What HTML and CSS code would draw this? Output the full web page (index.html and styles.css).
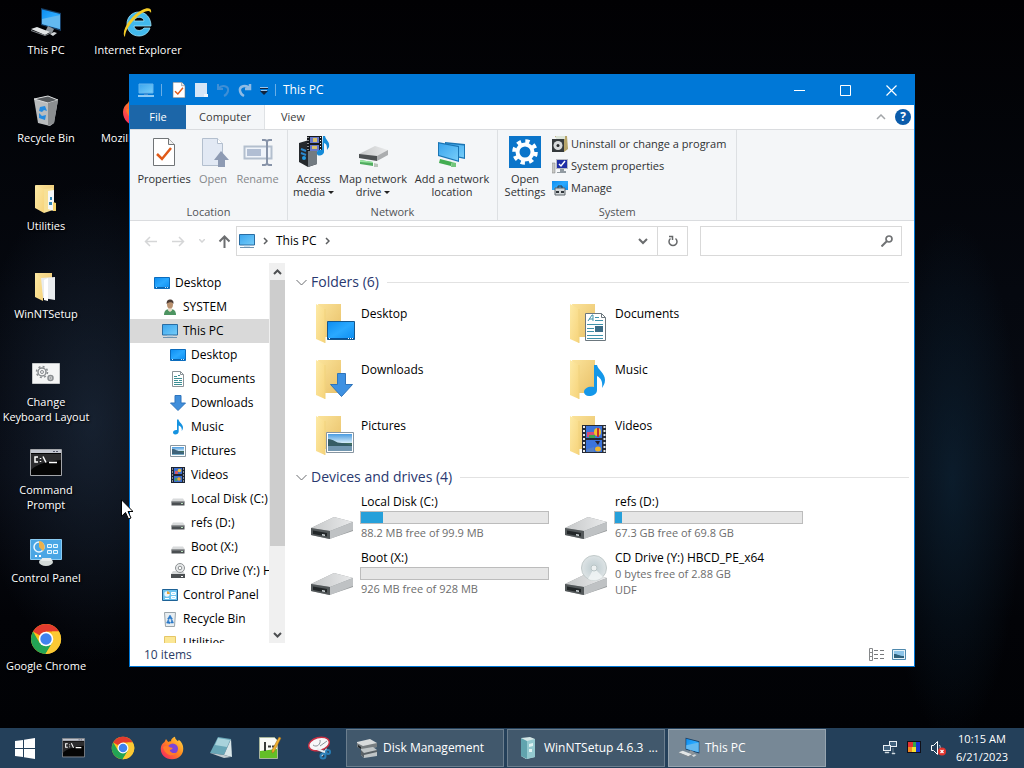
FILE: index.html
```
<!DOCTYPE html>
<html lang="en">
<head>
<meta charset="utf-8">
<title>This PC</title>
<link rel="stylesheet" href="styles.css">
</head>
<body>
<svg class="sprite" width="0" height="0" aria-hidden="true">
  <defs>
    <linearGradient id="gScreen" x1="0" y1="0" x2="1" y2="1"><stop offset="0" stop-color="#3aa5ee"/><stop offset="1" stop-color="#76cdf9"/></linearGradient>
    <linearGradient id="gBlue" x1="0" y1="0" x2="1" y2="1"><stop offset="0" stop-color="#0d8df0"/><stop offset=".5" stop-color="#2aa9ff"/><stop offset="1" stop-color="#0b8cf0"/></linearGradient>
    <linearGradient id="gFolder" x1="0" y1="0" x2="1" y2="1"><stop offset="0" stop-color="#fdeaa6"/><stop offset="1" stop-color="#f6d37a"/></linearGradient>
    <linearGradient id="gBack" x1="0" y1="0" x2="1" y2="1"><stop offset="0" stop-color="#fbe39a"/><stop offset="1" stop-color="#e8c068"/></linearGradient>
    <linearGradient id="gMetal" x1="0" y1="0" x2="1" y2="0"><stop offset="0" stop-color="#c6c8c9"/><stop offset="1" stop-color="#e9eaeb"/></linearGradient>
    <linearGradient id="gSky" x1="0" y1="0" x2="0" y2="1"><stop offset="0" stop-color="#4a9be0"/><stop offset=".5" stop-color="#cfe8f7"/><stop offset=".55" stop-color="#3f6c5a"/><stop offset="1" stop-color="#7fb6d8"/></linearGradient>
    <linearGradient id="gFire" x1="1" y1="0" x2="0" y2="1"><stop offset="0" stop-color="#ffe14a"/><stop offset=".45" stop-color="#ff8a1e"/><stop offset="1" stop-color="#f5156c"/></linearGradient>
    <radialGradient id="gDisc"><stop offset="0" stop-color="#ffffff"/><stop offset=".3" stop-color="#c7d3d6"/><stop offset="1" stop-color="#dde3e5"/></radialGradient>
  </defs>

  <symbol id="i-pc" viewBox="0 0 16 16"><path d="M.5 1.500h15v10.500h-15z" fill="url(#gScreen)" stroke="#2a6da3"/><path d="M5 12.500h6v1H5z" fill="#9fc4df"/><path d="M1 14h14v1H1z" fill="#6f93b0"/></symbol>
  <symbol id="i-pclight" viewBox="0 0 16 16"><path d="M1 2h14v9H1z" fill="url(#gScreen)" stroke="#63b4ee"/><path d="M6 11h4v2H6z" fill="#3c8fd6"/><path d="M0 13h16v2H0z" fill="#8cc9f4"/></symbol>
  <symbol id="i-desk" viewBox="0 0 16 16"><path d="M.5 2.500h15v11h-15z" fill="url(#gBlue)" stroke="#0b6cbd"/><path d="M1 12h14v1H1z" fill="#0a63ad"/><path d="M2 12h1v1H2zm9 0h1v1h-1zm2 0h1v1h-1z" fill="#bfe4ff"/></symbol>
  <symbol id="i-user" viewBox="0 0 16 16"><path d="M2 16c0-4 2-6 6-6s6 2 6 6z" fill="#4d9461"/><path d="M6 9h4v2.500L8 13l-2-1.500z" fill="#e9dccb"/><ellipse cx="8" cy="5.500" rx="3" ry="4" fill="#b9916f"/><path d="M4.600 5C4.500 1.500 6 .4 8.200.4S12 2 11.400 5c-.8-2-4.500-2.500-6.800 0z" fill="#4c3c35"/></symbol>
  <symbol id="i-doc" viewBox="0 0 16 16"><path d="M2.500.5h8l3 3v12h-11z" fill="#fff" stroke="#8b9398"/><path d="M10.500.5v3h3" fill="none" stroke="#8b9398"/><path d="M4 5.500h3M8 4.500h2M4 7.500h8M4 9.500h4M9 9.500h3M4 11.500h8M4 13.500h8" stroke="#3d8f95"/></symbol>
  <symbol id="i-down" viewBox="0 0 16 16"><path d="M5 .5h6V8h4.500L8 15.500.5 8H5z" fill="#3f8edb" stroke="#2f75bd"/></symbol>
  <symbol id="i-note" viewBox="0 0 16 16"><path d="M7 .5h1.500C9 3.500 13 5 13 8.500c0 1.500-.6 2.500-1.300 3.500.7-2.700-.8-4.600-3-5.500v6c0 2-1.700 3-3.400 3S3 14.500 3 13.300c0-1.500 1.700-2.600 4-2.300z" fill="#1592e0"/></symbol>
  <symbol id="i-pic" viewBox="0 0 16 16"><path d="M.5 2.500h15v11h-15z" fill="#fff" stroke="#8896a0"/><path d="M2 4h12v8H2z" fill="url(#gSky)"/><path d="M2 6c4 0 5 2 9 3l3 .5V11H2z" fill="#3f637a"/></symbol>
  <symbol id="i-film" viewBox="0 0 16 16"><path d="M1 0h14v16H1z" fill="#1c2433"/><path d="M4 1h8v6H4zm0 8h8v6H4z" fill="#3c70d0"/><path d="M2 1.500h1v1H2zm0 3h1v1H2zm0 3h1v1H2zm0 3h1v1H2zm0 3h1v1H2zm11-12h1v1h-1zm0 3h1v1h-1zm0 3h1v1h-1zm0 3h1v1h-1zm0 3h1v1h-1z" fill="#fff"/><path d="M5 4h3v3H5z" fill="#cf5a6c"/><circle cx="9.500" cy="3.500" r="1.800" fill="#efc23b"/><circle cx="9" cy="12" r="1.800" fill="#e8a02d"/><path d="M5 11h2v3H5z" fill="#48a05b"/></symbol>
  <symbol id="i-drive" viewBox="0 0 16 16"><path d="M3 7.500h10l2 3H1z" fill="#d8dadb"/><path d="M1.500 10.500h13v4h-13z" fill="#4b4f52"/><path d="M1.500 10.500h13v1h-13z" fill="#888c8f"/><path d="M11 12h2v1h-2z" fill="#b7dfba"/></symbol>
  <symbol id="i-cd" viewBox="0 0 16 16"><path d="M3 8h10l2 3H1z" fill="#d8dadb"/><circle cx="10" cy="5" r="4.500" fill="#e8eaeb" stroke="#8d9193"/><circle cx="10" cy="5" r="1.800" fill="#fff" stroke="#8d9193"/><path d="M1 11h14v4H1z" fill="#4b4f52"/><path d="M11 13h2v1h-2z" fill="#fff"/></symbol>
  <symbol id="i-cpl" viewBox="0 0 16 16"><path d="M.5 2.500h15v11h-15z" fill="#6cc3ee" stroke="#1e6296"/><circle cx="5" cy="7" r="2.700" fill="#eaf6fd"/><path d="M5 7V4.200A2.800 2.800 0 0 1 7.800 7z" fill="#e6a53c"/><path d="M9.500 5.500h4v2h-4zm0 4h4v2h-4z" fill="#a8e4ff" stroke="#fff"/><path d="M3 11h4v1H3z" fill="#fff"/></symbol>
  <symbol id="i-bin" viewBox="0 0 16 16"><path d="M2.500 1.500h11l-1 14h-9z" fill="#e8eef1" stroke="#9aa4aa"/><path d="M8 4l2.500 4-1.300.8L8 7 6.800 8.800 5.500 8zM4.500 12l1.500-3 1.200.8-.6 1.200H8v1.500zm7 0H8.800V11l.8-.3-.6-.9 1.200-.8z" fill="#2a79c8" stroke="#2a79c8" stroke-width=".5"/></symbol>
  <symbol id="i-fold" viewBox="0 0 16 16"><path d="M2.500 1.500h11v14h-11z" fill="#fbe795" stroke="#e5c667"/></symbol>

  <symbol id="f-base" viewBox="0 0 48 48"><path d="M10 4h23v33H14z" fill="url(#gBack)"/><path d="M8 4l9 5v34L8 39z" fill="url(#gFolder)"/><path d="M17 9v34" stroke="#f1d37d"/></symbol>
  <symbol id="d-base" viewBox="0 0 48 48"><path d="M3 34l23-11 19 5v9L21 45 3 41z" fill="#96999b"/><path d="M3 34l23-11 19 5-23 9z" fill="url(#gMetal)"/><path d="M22 37l23-9v8l-23 9z" fill="#bfc2c4"/><path d="M3 34l19 3v8L3 41z" fill="#53585a"/><path d="M5 36.500l14 2.500v3.500L5 40z" fill="#222628"/><path d="M14 40l3 .5v1.500l-3-.5z" fill="#d5dcdf"/></symbol>

  <symbol id="i-chrome" viewBox="0 0 32 32"><circle cx="16" cy="16" r="15" fill="#fbc116"/><path d="M16 16 3 8.500A15 15 0 0 1 29 8.500H16z" fill="#e33b2e"/><path d="M3 8.500A15 15 0 0 0 15.500 31L22.500 19.500 9.500 19.700z" fill="#23a455"/><path d="M29 8.500A15 15 0 0 1 15.500 31l7-11.500L22 8.500z" fill="#fcc934"/><circle cx="16" cy="16" r="7.300" fill="#fff"/><circle cx="16" cy="16" r="5.700" fill="#3f83f0"/></symbol>
  <symbol id="i-fox" viewBox="0 0 32 32"><path d="M6 8l2-4 3 4c2-1 3-1 4-1-1-2 2-5 5-6 0 3 2 4 4 6l1-2c4 3 6 7 6 12 0 8-6 14-15 14S1 25 1 17c0-4 2-7 5-9z" fill="url(#gFire)"/><circle cx="17" cy="17" r="7" fill="#7a45d8"/><path d="M4 15c4-3 7-2 9 0l4 1c-1 2-3 2-4 3 1 3 5 5 9 3-2 4-8 5-12 2-3-2-5-5-6-9z" fill="#ff7a2b"/></symbol>
  <symbol id="i-cmd" viewBox="0 0 32 28"><path d="M.5.5h31v26h-31z" fill="#050505" stroke="#a3a5a9"/><path d="M1 1h30v3H1z" fill="#c2c5ce"/><path d="M23 2h2v1h-2zm3 0h2v1h-2z" fill="#55586a"/><path d="M1 5h30v6C20 12 8 14 1 21z" fill="#2c2c2e"/><path d="M8 8H5v5h3M10.500 9v1m0 2v1M13 7.500l3 6M19 13.500h8" fill="none" stroke="#fff" stroke-width="1.500"/></symbol>
  <symbol id="i-bigpc" viewBox="0 0 32 32"><path d="M11 1l20 5v18l-20-6z" fill="#173f66"/><path d="M12 2.500l18 4.600v15L12 17z" fill="url(#gBlue)"/><path d="M12 12l18-4v14L12 17z" fill="#63b9f0"/><path d="M18 19l6 3-2 4-7-1z" fill="#8c9399"/><path d="M1 22l6-2 13 5-5 3z" fill="#e2e5e6"/><path d="M1 23l14 5 7-3v1l-7 3L1 24z" fill="#858b90"/><path d="M20 27l4-2 3 1-4 3z" fill="#d3d7d9"/></symbol>
  <symbol id="i-check" viewBox="0 0 24 28"><path d="M1.500.5h15l6 6v21h-21z" fill="#fff" stroke="#707477"/><path d="M16.500.5v6h6" fill="#eee" stroke="#707477"/><path d="M5 16l5 5 9-11" fill="none" stroke="#e05a18" stroke-width="2.500"/></symbol>
  <symbol id="i-screen" viewBox="0 0 32 32"><path d="M9 6l20 2v15L9 19z" fill="#1b75b4"/><path d="M10 7.500l18 2v12L10 18z" fill="url(#gScreen)"/><path d="M2 6l21 4v16L2 20z" fill="#1b75b4"/><path d="M3 7.500l19 3.500v13.500L3 19z" fill="url(#gScreen)"/></symbol>
</svg>

<main class="desktop">
  <nav class="shortcuts" aria-label="Desktop">
    <a href="#" class="shortcut"><svg class="ico32"><use href="#i-bigpc"/></svg><span>This PC</span></a>
    <a href="#" class="shortcut"><svg class="ico32" viewBox="0 0 32 32"><path d="M29 19H12c.5 5 7 6 10 2h6c-2 6-7 8-11 8C10 29 5 24 5 17S10 5 17 5s12 6 12 14zM12 14h10c-.5-5-9-5-10 0z" fill="#42b9ec" stroke="#9ee4fb" stroke-width=".8"/><path d="M3 30C-2 25 9 8 20 3c6-3 10-2 9 3-2-4-8-1-13 3C8 16 3 24 3 30z" fill="#f4cc28"/></svg><span>Internet Explorer</span></a>
    <a href="#" class="shortcut"><svg class="ico32" viewBox="0 0 32 32"><path d="M4 4l14-3 10 4-4 23-4 3-12-3z" fill="#b9bcbe"/><path d="M4 4l14-3 10 4-10 3z" fill="#55595c" stroke="#d9dbdc"/><path d="M18 8l10-3-4 23-6 3z" fill="#8b8e90"/><path d="M10 12l5-1 2 5-3-1-2 2-3-1zm-1 6l3 3 4-1-1 5-6-2z" fill="#258be0"/></svg><span>Recycle Bin</span></a>
    <a href="#" class="shortcut"><svg class="ico32" viewBox="0 0 32 32"><path d="M6 2h18v24H8z" fill="url(#gBack)"/><path d="M5 2l9 4v24l-9-5z" fill="url(#gFolder)"/><path d="M14 6l9-1v22l-9 3z" fill="#f7e096"/><path d="M18 8l6-1v21l-6-2z" fill="#f5f7f8"/><path d="M20 14h2v3h-2zm-1 5h3v3h-3z" fill="#3387b5"/><path d="M23 19l3 1v8h-3z" fill="#f7d46d"/></svg><span>Utilities</span></a>
    <a href="#" class="shortcut"><svg class="ico32" viewBox="0 0 32 32"><path d="M5 2h17v24H8z" fill="url(#gBack)"/><path d="M5 2l8 6v22l-8-4z" fill="url(#gFolder)"/><path d="M11 7l14-1v23l-12-2z" fill="#e9ecee"/><path d="M14 9l4-2v23l-4-1z" fill="#fff"/></svg><span>WinNTSetup</span></a>
    <a href="#" class="shortcut"><svg class="ico32" viewBox="0 0 32 32"><path d="M2.500 4.500h27v20h-27z" fill="#f4f5f5" stroke="#c5c8c9"/><g fill="none" stroke="#898d90"><circle cx="12" cy="13" r="4" stroke-width="1.500"/><circle cx="12" cy="13" r="5.500" stroke-width="1.500" stroke-dasharray="2 2.320"/><circle cx="12" cy="13" r="1.500"/><circle cx="20.500" cy="19" r="2.500" stroke-width="1.500"/><circle cx="20.500" cy="19" r=".8"/></g></svg><span>Change<br>Keyboard Layout</span></a>
    <a href="#" class="shortcut"><svg class="ico32"><use href="#i-cmd"/></svg><span>Command<br>Prompt</span></a>
    <a href="#" class="shortcut"><svg class="ico32" viewBox="0 0 32 32"><path d="M.5 4.500h31v20h-31z" fill="#4aa6e4" stroke="#8bcbf2"/><circle cx="9" cy="12" r="5" fill="none" stroke="#e9f6ff" stroke-width="1.500"/><path d="M9 12V6a6 6 0 0 1 4 10z" fill="#e9b14c"/><path d="M17.500 9.500h4v3h-4zm6 0h4v3h-4zm-6 6h4v3h-4zm6 0h4v3h-4z" fill="#58b9f0" stroke="#e9f6ff"/><path d="M5 20h2v2H5zm4 0h2v2H9z" fill="#fff"/><ellipse cx="16" cy="27" rx="7" ry="4" fill="#d4dad9"/><path d="M12 23h9l1 3H11z" fill="#e8ecec"/></svg><span>Control Panel</span></a>
    <a href="#" class="shortcut"><svg class="ico32"><use href="#i-chrome"/></svg><span>Google Chrome</span></a>
    <a href="#" class="shortcut"><svg class="ico32"><use href="#i-fox"/></svg><span>Mozilla Firefox</span></a>
  </nav>

  <section class="window" aria-label="This PC">
    <header class="titlebar">
      <svg class="ico16"><use href="#i-pclight"/></svg>
      <span class="bar"></span>
      <div class="quick">
        <button aria-label="Properties"><svg class="ico16"><use href="#i-check"/></svg></button>
        <button aria-label="New folder"><svg class="ico16" viewBox="0 0 16 16"><path d="M2 1h12v11l-2 3H2z" fill="#d6e6f7"/><path d="M11 12h4v3h-4z" fill="#f1f6fb"/></svg></button>
        <button aria-label="Undo"><svg class="ico16" viewBox="0 0 16 16"><path d="M3 2v5h5M3 7c4-5 11-3 10 2-.4 2-2 4-4 5" fill="none" stroke="#3f8fd6" stroke-width="2"/></svg></button>
        <button aria-label="Redo"><svg class="ico16" viewBox="0 0 16 16"><path d="M13 2v5H8M13 7C9 2 2 4 3 9c.4 2 2 4 4 5" fill="none" stroke="#8fbbe4" stroke-width="2.500"/></svg></button>
      </div>
      <button class="more" aria-label="Customize"><svg width="8" height="8" viewBox="0 0 8 8"><path d="M0 1h8v1H0zm0 3h8L4 8z" fill="#10233c"/><path d="M0 0h8v1H0zM1 3h6v1H1z" fill="#9cc4ea"/></svg></button>
      <span class="bar"></span>
      <h1>This PC</h1>
      <div class="controls">
        <button aria-label="Minimize"><svg width="11" height="11"><path d="M0 5.500h11" stroke="#fff"/></svg></button>
        <button aria-label="Maximize"><svg width="11" height="11"><path d="M.5.5h10v10H.5z" fill="none" stroke="#fff"/></svg></button>
        <button aria-label="Close"><svg width="11" height="11"><path d="M.5.5l10 10m0-10l-10 10" stroke="#fff" stroke-width="1.200"/></svg></button>
      </div>
    </header>

    <nav class="tabs">
      <button class="file">File</button>
      <button class="current">Computer</button>
      <button class="view">View</button>
      <span class="tabs-end">
        <button aria-label="Collapse ribbon"><svg width="10" height="6"><path d="M1 5l4-4 4 4" fill="none" stroke="#a3a6a9" stroke-width="1.500"/></svg></button>
        <button class="help" aria-label="Help">?</button>
      </span>
    </nav>

    <div class="ribbon">
      <section class="group">
        <div class="tools">
          <button class="big w-prop"><svg class="ico32 inset"><use href="#i-check"/></svg>Properties</button>
          <button class="big w-open off"><svg class="ico32" viewBox="0 0 32 32"><path d="M5.500 2.500h15l5 5v22h-20z" fill="#e2e9f4" stroke="#b3bfce"/><path d="M20.500 2.500v5h5" fill="#fff" stroke="#b3bfce"/><path d="M24 15l8 9h-4v7h-7v-7h-4z" fill="#8e9bb3"/></svg>Open</button>
          <button class="big w-ren off"><svg class="ico32" viewBox="0 0 32 32"><path d="M2.500 10.500h27v12h-27z" fill="#f0f4fa" stroke="#b3bfce" stroke-width="2"/><path d="M5 13h14v7H5z" fill="#b1bed3"/><path d="M20 4h3l2 1 2-1h3M25 5v23M20 29h3l2-1 2 1h3" fill="none" stroke="#8793a8" stroke-width="2"/></svg>Rename</button>
        </div>
        <h2>Location</h2>
      </section>
      <section class="group">
        <div class="tools">
          <button class="big w-acc"><svg class="ico32" viewBox="0 0 32 32"><path d="M1 7l10-3 8 4v20l-9 3-9-5z" fill="#25292d"/><path d="M10 11l9-3v20l-9 3z" fill="#737b82"/><path d="M3 13l5 2M3 17l5 2" stroke="#2d88cc" stroke-width="2"/><circle cx="6" cy="22" r="2" fill="#249adf"/><path d="M9 0h15v15H9z" fill="#15181d"/><path d="M12 1h9v6h-9zm0 8h9v6h-9z" fill="#6878c7"/><path d="M15 2h4v4h-4zm-1 8h5v3h-5z" fill="#d8bf69"/><path d="M10 1v13M22.500 1v13" stroke="#fff" stroke-dasharray="1 2"/><path d="M25 0h2c1 5 5 5 4 11l-2 3c0-3 0-6-3-7v9c0 3-6 5-7 2s2-5 5-4z" fill="#158bd8"/></svg><span>Access<br>media <i class="caret"></i></span></button>
          <button class="big w-map"><svg class="ico32" viewBox="0 0 32 32"><path d="M2 18l16-8 13 4v4l-10 6-19-2z" fill="url(#gMetal)"/><path d="M2 18l18 2v5L2 22z" fill="#4d5153"/><path d="M20 20l11-6v5l-11 6z" fill="#abadaf"/><path d="M3 24l13 2v4L3 28z" fill="#51ad60"/><path d="M3 24l13 2v1L3 26z" fill="#9be6a3"/><path d="M17 27l4 1v3h-4z" fill="#b8c4ba"/></svg><span>Map network<br>drive <i class="caret"></i></span></button>
          <button class="big w-add"><svg class="ico32" viewBox="0 0 32 32"><use href="#i-screen"/><path d="M4 23l12 3-1 4-12-3z" fill="#43ad52"/><path d="M16 26l4 1v4h-5z" fill="#73c67b"/></svg><span>Add a network<br>location</span></button>
        </div>
        <h2>Network</h2>
      </section>
      <section class="group">
        <div class="tools">
          <button class="big w-set"><svg class="ico32" viewBox="0 0 32 32"><path d="M0 0h32v32H0z" fill="#0b75ca"/><g fill="none" stroke="#fff"><circle cx="16" cy="16" r="7.500" stroke-width="4"/><circle cx="16" cy="16" r="10.800" stroke-width="4" stroke-dasharray="4.240 4.240"/></g></svg><span>Open<br>Settings</span></button>
          <div class="small-tools">
            <button><svg class="ico16" viewBox="0 0 16 16"><path d="M3 0h12l1 13-4 3z" fill="#b6a469"/><path d="M4 0h9v3H4z" fill="#dde5d9"/><path d="M0 3h12v13H0z" fill="#353a3c"/><circle cx="6" cy="9.500" r="4.500" fill="#d8dbdc"/><circle cx="6" cy="9.500" r="1.500" fill="#25282a"/></svg>Uninstall or change a program</button>
            <button><svg class="ico16" viewBox="0 0 16 16"><path d="M0 5h3v10H0z" fill="#c8c9c5" stroke="#7c7f80" stroke-width=".5"/><path d="M4 1h12v10H4z" fill="#b9bcc4"/><path d="M5 2h10v8H5z" fill="#1f2fa6"/><path d="M7 6l2 2 4-5" fill="none" stroke="#fff" stroke-width="1.500"/><path d="M8 11h4v2h2v2H5v-1h3z" fill="#929ba2"/></svg>System properties</button>
            <button><svg class="ico16" viewBox="0 0 16 16"><path d="M0 1h16v9H0z" fill="url(#gBlue)"/><path d="M3 8h10v7H3z" fill="#d3d7d9" stroke="#5c656b"/><path d="M6 8V6h4v2" fill="none" stroke="#333a40"/><path d="M4 11h3v2H4zm5 0h3v2H9z" fill="#30363c"/></svg>Manage</button>
          </div>
        </div>
        <h2>System</h2>
      </section>
    </div>

    <div class="location">
      <div class="history">
        <button class="w28" aria-label="Back"><svg width="13" height="11"><path d="M13 5.500H1.500M6 1L1.500 5.500 6 10" fill="none" stroke="#d5d6d7" stroke-width="1.500"/></svg></button>
        <button class="w28" aria-label="Forward"><svg width="13" height="11"><path d="M0 5.500h11.500M7 1l4.500 4.500L7 10" fill="none" stroke="#d5d6d7" stroke-width="1.500"/></svg></button>
        <button class="w20" aria-label="Recent"><svg width="6" height="4"><path d="M0 0l3 3 3-3" fill="none" stroke="#d5d6d7" stroke-width="1.500"/></svg></button>
        <button class="w22" aria-label="Up"><svg width="13" height="13"><path d="M6.500 13V1.500M1.500 6.500l5-5 5 5" fill="none" stroke="#6c6e70" stroke-width="2"/></svg></button>
      </div>
      <div class="address">
        <svg class="ico16"><use href="#i-pc"/></svg>
        <svg width="5" height="8"><path d="M1 1l3 3-3 3" fill="none" stroke="#5c5e60" stroke-width="1.500"/></svg>
        <a href="#">This PC</a>
        <svg width="5" height="8"><path d="M1 1l3 3-3 3" fill="none" stroke="#5c5e60" stroke-width="1.500"/></svg>
        <button class="drop" aria-label="Previous locations"><svg width="10" height="7"><path d="M1 1l4 4 4-4" fill="none" stroke="#6a6c6e" stroke-width="2"/></svg></button>
        <button class="refresh" aria-label="Refresh"><svg width="12" height="12" viewBox="0 0 12 12"><path d="M8.500 3.500A4 4 0 1 1 3.500 3.500M2 1.500h3.500V5" fill="none" stroke="#66686a" stroke-width="1.500"/></svg></button>
      </div>
      <label class="search"><input type="text" aria-label="Search This PC"><svg width="12" height="12"><circle cx="8" cy="4" r="3" fill="none" stroke="#707274" stroke-width="1.700"/><path d="M6 6l-5.500 5.500" stroke="#707274" stroke-width="2"/></svg></label>
    </div>

    <div class="body">
      <nav class="tree" aria-label="Folders">
        <a href="#" class="l1"><svg class="ico16"><use href="#i-desk"/></svg>Desktop</a>
        <a href="#" class="l2"><svg class="ico16"><use href="#i-user"/></svg>SYSTEM</a>
        <a href="#" class="l2 selected"><svg class="ico16"><use href="#i-pc"/></svg>This PC</a>
        <a href="#" class="l3"><svg class="ico16"><use href="#i-desk"/></svg>Desktop</a>
        <a href="#" class="l3"><svg class="ico16"><use href="#i-doc"/></svg>Documents</a>
        <a href="#" class="l3"><svg class="ico16"><use href="#i-down"/></svg>Downloads</a>
        <a href="#" class="l3"><svg class="ico16"><use href="#i-note"/></svg>Music</a>
        <a href="#" class="l3"><svg class="ico16"><use href="#i-pic"/></svg>Pictures</a>
        <a href="#" class="l3"><svg class="ico16"><use href="#i-film"/></svg>Videos</a>
        <a href="#" class="l3"><svg class="ico16"><use href="#i-drive"/></svg>Local Disk (C:)</a>
        <a href="#" class="l3"><svg class="ico16"><use href="#i-drive"/></svg>refs (D:)</a>
        <a href="#" class="l3"><svg class="ico16"><use href="#i-drive"/></svg>Boot (X:)</a>
        <a href="#" class="l3"><svg class="ico16"><use href="#i-cd"/></svg>CD Drive (Y:) HBCD_PE_x64</a>
        <a href="#" class="l2"><svg class="ico16"><use href="#i-cpl"/></svg>Control Panel</a>
        <a href="#" class="l2"><svg class="ico16"><use href="#i-bin"/></svg>Recycle Bin</a>
        <a href="#" class="l2"><svg class="ico16"><use href="#i-fold"/></svg>Utilities</a>
      </nav>
      <div class="scroll">
        <button aria-label="Scroll up"><svg width="9" height="6"><path d="M1 5l3.500-3.500L8 5" fill="none" stroke="#4d4f51" stroke-width="2"/></svg></button>
        <div class="track"><div class="thumb"></div></div>
        <button aria-label="Scroll down"><svg width="9" height="6"><path d="M1 1l3.500 3.500L8 1" fill="none" stroke="#4d4f51" stroke-width="2"/></svg></button>
      </div>

      <div class="files">
        <section>
          <h2 class="head"><svg width="11" height="7"><path d="M.5 1l5 5 5-5" fill="none" stroke="#6a6c70"/></svg>Folders (6)</h2>
          <div class="tiles">
            <button class="tile"><svg class="ico48" viewBox="0 0 48 48"><use href="#f-base"/><path d="M19.500 21.500h27v18h-27z" fill="url(#gBlue)" stroke="#15578d"/><path d="M20 38h26v1H20z" fill="#07529a"/><path d="M21 38h1v1h-1zm19 0h1v1h-1zm2 0h1v1h-1zm2 0h1v1h-1z" fill="#fff"/></svg><span class="name">Desktop</span></button>
            <button class="tile"><svg class="ico48" viewBox="0 0 48 48"><use href="#f-base"/><path d="M23.500 13.500h16l4 4v23h-20z" fill="#fff" stroke="#6c777e"/><path d="M39.500 13.500v4h4" fill="none" stroke="#6c777e"/><path d="M26 21l4-6h1v6M27 19h4M33 17.500h4M33 20.500h8M25 24.500h16M25 28.500h7M25 31.500h7M25 35.500h16M25 38.500h16" fill="none" stroke="#3e91aa"/><path d="M33 26h8v6h-8z" fill="#3b6d87"/></svg><span class="name">Documents</span></button>
            <button class="tile"><svg class="ico48" viewBox="0 0 48 48"><use href="#f-base"/><path d="M29.500 17.500h8v11h7l-11 12-11-12h7z" fill="#3e91e2" stroke="#2f74bb"/></svg><span class="name">Downloads</span></button>
            <button class="tile"><svg class="ico48" viewBox="0 0 48 48"><use href="#f-base"/><path d="M32 9h3c1 5 8 8 8 15 0 4-2 6-3 8 1-6-1-10-5-12v14c0 4-4 6-8 6-3 0-5-2-5-4 0-4 5-6 10-5z" fill="#1497e9"/></svg><span class="name">Music</span></button>
            <button class="tile"><svg class="ico48" viewBox="0 0 48 48"><use href="#f-base"/><path d="M18.500 20.500h27v20h-27z" fill="#fff" stroke="#8795a1"/><path d="M20 22h24v17H20z" fill="url(#gSky)"/><path d="M20 27c6 0 7 4 14 4l10 2v3H20z" fill="#365d65"/><path d="M20 34h24v5H20z" fill="#7297b0"/></svg><span class="name">Pictures</span></button>
            <button class="tile"><svg class="ico48" viewBox="0 0 48 48"><use href="#f-base"/><path d="M20 13h24v28H20z" fill="#252a35"/><path d="M24 14h16v12H24zm0 14h16v12H24z" fill="#3c74db"/><path d="M22 14v27M42.500 14v27" stroke="#e8ebee" stroke-width="2" stroke-dasharray="2 2"/><path d="M25 20h8v5h-8z" fill="#d64c76"/><path d="M27 23h6v3h-6z" fill="#3ca454"/><ellipse cx="35.500" cy="20" rx="3.500" ry="4" fill="#f1c22b"/><path d="M35 16h2v9h-2z" fill="#c22c31"/><path d="M33 29h5l-2 4z" fill="#2a2027"/><ellipse cx="36" cy="37" rx="3" ry="2.500" fill="#edb42d"/><path d="M25 37l7-2v5h-7z" fill="#5680c3"/></svg><span class="name">Videos</span></button>
          </div>
        </section>
        <section>
          <h2 class="head"><svg width="11" height="7"><path d="M.5 1l5 5 5-5" fill="none" stroke="#6a6c70"/></svg>Devices and drives (4)</h2>
          <div class="tiles drives">
            <button class="tile"><svg class="ico48"><use href="#d-base"/></svg><span class="info"><span>Local Disk (C:)</span><progress value="12" max="100"></progress><small>88.2 MB free of 99.9 MB</small></span></button>
            <button class="tile"><svg class="ico48"><use href="#d-base"/></svg><span class="info"><span>refs (D:)</span><progress value="4" max="100"></progress><small>67.3 GB free of 69.8 GB</small></span></button>
            <button class="tile"><svg class="ico48"><use href="#d-base"/></svg><span class="info"><span>Boot (X:)</span><progress value="0" max="100"></progress><small>926 MB free of 928 MB</small></span></button>
            <button class="tile"><svg class="ico48" viewBox="0 0 48 48"><use href="#d-base"/><circle cx="32" cy="18" r="12.500" fill="url(#gDisc)" stroke="#c1caca"/><path d="M32 18l9 9a13 13 0 0 1-15 2z" fill="#f4f7f7" opacity=".8"/><circle cx="32" cy="18" r="3" fill="#edf1f1" stroke="#b8c4c5"/></svg><span class="info"><span>CD Drive (Y:) HBCD_PE_x64</span><small>0 bytes free of 2.88 GB</small><small>UDF</small></span></button>
          </div>
        </section>
      </div>
    </div>

    <footer class="status">
      <span>10 items</span>
      <div>
        <button aria-label="Details view"><svg width="17" height="13"><path d="M1.500.5h3v12h-3zM1.500 4.500h3M1.500 8.500h3" fill="none" stroke="#86888a"/><path d="M6 2.500h5m1 0h5M6 6.500h5m1 0h5M6 10.500h5m1 0h5" stroke="#77797b" stroke-dasharray="4 1"/></svg></button>
        <button aria-label="Large icons view"><svg width="14" height="11"><path d="M.5.500h13v10H.5z" fill="#e5f3fa" stroke="#4f89ad"/><path d="M2 2h10v7H2z" fill="#8cc4e8"/><path d="M2 5c4 0 5 2 10 2v2H2z" fill="#2e607b"/></svg></button>
      </div>
    </footer>
  </section>

  <svg class="pointer" width="12" height="21" viewBox="0 0 12 21"><path d="M.5.800v16.500l4-3.800 3 6.500 2.500-1-3-6.500h5z" fill="#fff" stroke="#000"/></svg>
</main>

<footer class="taskbar">
  <div class="pins">
    <button aria-label="Start"><svg width="22" height="22" viewBox="0 0 22 22"><path d="M1 4l8-1v8H1zm9-1.200L21 1v10H10zM1 12h8v8l-8-1zm9 0h11v10l-11-1.700z" fill="#fff"/></svg></button>
    <button aria-label="Command Prompt"><svg width="23" height="20"><use href="#i-cmd"/></svg></button>
    <button aria-label="Google Chrome"><svg width="24" height="24"><use href="#i-chrome"/></svg></button>
    <button aria-label="Mozilla Firefox"><svg width="24" height="24"><use href="#i-fox"/></svg></button>
    <button aria-label="Notepad"><svg width="24" height="24" viewBox="0 0 24 24"><path d="M9 1l13 2-7 16-14-2z" fill="#68a6b7"/><path d="M9 2l12 2-3 7-12-2z" fill="#a9d3dc"/><path d="M1 17l14 2 7 2-7 1z" fill="#c3ccd0"/><path d="M22 3l1 18-8-2z" fill="#d9e6e9"/></svg></button>
    <button aria-label="Notepad++"><svg width="24" height="24" viewBox="0 0 24 24"><path d="M1.500 1.500h15l3 3v18h-18z" fill="#f8faf5" stroke="#a9b69c"/><path d="M2 15l17-2v9H2z" fill="#63bf27"/><path d="M7 6v9M10 10.500h3m1 0h3" stroke="#383b38" stroke-width="2"/><path d="M21 1l2 1-7 14-2 1v-3z" fill="#efb02d" stroke="#9b671d" stroke-width=".5"/></svg></button>
    <button aria-label="Snipping Tool"><svg width="24" height="24" viewBox="0 0 24 24"><ellipse cx="12" cy="8" rx="10.500" ry="6.500" transform="rotate(-15 12 8)" fill="#f7f7f8" stroke="#c92f43" stroke-width="1.500"/><path d="M6 9c4 3 8-1 7-5m0 6l7-5" fill="none" stroke="#8b9097"/><path d="M10 13l10 4M20 13l-6 7" stroke="#e9edf0" stroke-width="2"/><circle cx="16" cy="20" r="2.500" fill="none" stroke="#297eb7" stroke-width="2"/><circle cx="21" cy="16" r="2" fill="none" stroke="#297eb7" stroke-width="2"/></svg></button>
  </div>
  <div class="tasks">
    <button><svg width="22" height="22" viewBox="0 0 22 22"><path d="M1 5l13-3 7 4v4l-14 2-6-3z" fill="#d8dbdc"/><path d="M1 6l6 3 14-3v4L7 13l-6-3z" fill="#777d80"/><path d="M5 12l12-2 4 3v6L8 21l-3-3z" fill="#bfc5c7"/><path d="M5 13l3 3v5l-3-3zm3 3l13-3v2L8 18z" fill="#596166"/><path d="M2 8l3 2v2l-3-2z" fill="#202629"/></svg><span>Disk Management</span></button>
    <button><svg width="22" height="22" viewBox="0 0 22 22"><path d="M4 1l9-1 5 2v18l-9 2-5-3z" fill="#d4e6e6"/><path d="M4 1l6 3v18l-6-3z" fill="#61a4ae"/><path d="M10 4l8-2v18l-8 2z" fill="#93c9cf"/><path d="M12 7l4-1v3l-4 1zm0 5h3v3h-3z" fill="#dff3f2"/></svg><span>WinNTSetup 4.6.3</span><span class="ellipsis">...</span></button>
    <button class="active"><svg width="22" height="22"><use href="#i-bigpc"/></svg><span>This PC</span></button>
  </div>
  <div class="tray">
    <button aria-label="Network"><svg class="ico16" viewBox="0 0 16 16"><path d="M7 1h8v6H7z" fill="#e9eff4"/><path d="M8 2h6v4H8z" fill="#42627e"/><path d="M1 5h8v6H1z" fill="#e9eff4"/><path d="M2 6h6v4H2z" fill="#42627e"/><path d="M3 12h4v1H3zm8-4v5M10 13h3v1h-3z" fill="#e9eff4" stroke="#b9c6cf" stroke-width=".5"/></svg></button>
    <button aria-label="Display colors"><svg class="ico16" viewBox="0 0 16 16"><path d="M1 1h14v12H1z" fill="#101018"/><path d="M2 2h5v5H2z" fill="#e43232"/><path d="M7 2h3v5H7z" fill="#36a944"/><path d="M10 2h4v10h-4z" fill="#1735d0"/><path d="M2 7h4v5H2z" fill="#f08a25"/><path d="M6 7h4v5H6z" fill="#f4e132"/></svg></button>
    <button aria-label="Volume muted"><svg class="ico16" viewBox="0 0 16 16"><path d="M1.500 5.500h2l4-4v13l-4-4h-2z" fill="none" stroke="#fff"/><path d="M9.500 5c1 2 1 4 0 6" fill="none" stroke="#c4cfd7"/><circle cx="12" cy="11.500" r="4" fill="#e1332d"/><path d="M10.500 10l3 3m0-3l-3 3" stroke="#fff" stroke-width="1.200"/></svg></button>
    <time datetime="2023-06-21T10:15">10:15 AM<br>6/21/2023</time>
  </div>
</footer>
</body>
</html>
```
FILE: styles.css
```
* { box-sizing: border-box; }

body {
  margin: 0;
  height: 100vh;
  overflow: hidden;
  display: flex;
  flex-direction: column;
  background: #020308;
  color: #000;
  font: 12px/16px "Open Sans", "Noto Sans", sans-serif;
}

h1, h2 { margin: 0; font-size: inherit; font-weight: 400; }
a { color: inherit; text-decoration: none; }
svg { display: block; flex: none; }
button {
  border: 0;
  padding: 0;
  background: none;
  color: inherit;
  font: inherit;
  display: flex;
  align-items: center;
  justify-content: center;
}

.sprite { position: absolute; }
.ico16 { width: 16px; height: 16px; }
.ico32 { width: 32px; height: 32px; }
.ico48 { width: 48px; height: 48px; }

/* Desktop */
.desktop {
  position: relative;
  flex: 1;
  min-height: 0;
  background:
    radial-gradient(ellipse 120px 240px at 9% 58%, rgba(38, 56, 78, .5), transparent),
    radial-gradient(ellipse 70px 260px at 93% 66%, rgba(14, 40, 60, .6), transparent),
    linear-gradient(#010103, #05080f 40%, #070a12 65%, #020307 85%, #010205);
}

.shortcuts {
  height: 100%;
  display: grid;
  grid-auto-flow: column;
  grid-template-rows: repeat(8, 88px);
  grid-auto-columns: 92px;
}
.shortcut {
  display: flex;
  flex-direction: column;
  align-items: center;
  gap: 3px;
  padding-top: 7px;
  color: #fff;
  font-size: 11px;
  line-height: 15px;
  text-align: center;
  text-shadow: 1px 1px 2px #000;
  white-space: nowrap;
}
.shortcut:nth-child(2) { grid-area: 1 / 2; }
.shortcut:nth-child(10) { grid-area: 2 / 2; }
.pointer { position: absolute; left: 121px; top: 499px; }

/* Explorer window */
.window {
  position: absolute;
  inset: 74px 109px 61px 129px;
  display: flex;
  flex-direction: column;
  background: #fff;
  border: 1px solid #0078d7;
}

.titlebar {
  flex: none;
  height: 30px;
  display: flex;
  align-items: center;
  padding-left: 8px;
  gap: 7px;
  background: #0078d7;
  color: #fff;
}
.bar { width: 1px; height: 12px; background: #6aaee6; }
.quick { display: flex; gap: 6px; padding-left: 2px; }
.more { padding-top: 2px; }
.controls { display: flex; align-self: stretch; margin-left: auto; }
.controls button { width: 46px; }

.tabs { flex: none; height: 24px; display: flex; color: #3b3b3b; font-size: 11px; }
.tabs .file { width: 56px; background: #1c66a8; color: #fff; }
.tabs .current { width: 79px; background: #f4f6f8; border-right: 1px solid #dfe2e5; }
.tabs .view { width: 56px; }
.tabs-end { display: flex; align-items: center; gap: 9px; margin-left: auto; padding-right: 3px; }
.help {
  width: 16px;
  height: 16px;
  border-radius: 50%;
  background: #0b5cab;
  color: #fff;
  font-size: 12px;
  font-weight: 700;
}

.ribbon {
  flex: none;
  display: flex;
  height: 92px;
  background: #f4f6f8;
  border: solid #dadcdf;
  border-width: 1px 0;
  color: #2f3133;
  font-size: 11px;
}
.group {
  display: flex;
  flex-direction: column;
  justify-content: space-between;
  padding: 6px 4px 0;
  border-right: 1px solid #dde0e3;
}
.group h2 { text-align: center; color: #505356; }
.tools { display: flex; align-items: flex-start; }
.big {
  flex-direction: column;
  justify-content: flex-start;
  gap: 4px;
  line-height: 13px;
  white-space: nowrap;
}
.inset { padding: 2px 0; }
.off { color: #85888b; }
.w-prop { width: 60px; }
.w-open { width: 38px; }
.w-ren { width: 51px; }
.w-acc { width: 43px; }
.w-map { width: 76px; }
.w-add { width: 82px; }
.w-set { width: 46px; }
.caret {
  display: inline-block;
  border: 3px solid transparent;
  border-top-color: #222;
  border-bottom: 0;
  vertical-align: 2px;
}
.small-tools { display: flex; flex-direction: column; gap: 6px; padding: 0 6px 0 4px; }
.small-tools button { justify-content: flex-start; gap: 3px; white-space: nowrap; }

.location { flex: none; display: flex; gap: 12px; height: 42px; padding: 5px 12px 7px 6px; }
.history { display: flex; margin-right: -12px; }
.w28 { width: 28px; }
.w20 { width: 20px; }
.w22 { width: 24px; }
.address {
  flex: 1;
  display: flex;
  align-items: center;
  gap: 8px;
  padding-left: 2px;
  border: 1px solid #d9d9d9;
}
.address button { align-self: stretch; }
.drop { margin-left: auto; width: 20px; }
.refresh { width: 30px; margin-left: -4px; border-left: 1px solid #d9d9d9; }
.search {
  width: 202px;
  display: flex;
  align-items: center;
  padding-right: 8px;
  border: 1px solid #d9d9d9;
}
.search input { flex: 1; min-width: 0; border: 0; background: none; font: inherit; }

.body { flex: 1; min-height: 0; display: flex; }
.tree { flex: none; width: 139px; padding-top: 8px; overflow: hidden; }
.tree a {
  display: flex;
  align-items: center;
  gap: 5px;
  height: 24px;
  white-space: nowrap;
}
.tree .l1 { padding-left: 24px; }
.tree .l2 { padding-left: 32px; }
.tree .l3 { padding-left: 40px; }
.tree .selected { background: #d9d9d9; }
.scroll { flex: none; width: 16px; padding-left: 1px; display: flex; flex-direction: column; background: #f0f0f0; }
.scroll button { height: 17px; }
.track { flex: 1; }
.thumb { height: 77%; background: #cdcdcd; }

.files { flex: 1; min-width: 0; padding: 9px 5px 0 11px; overflow: hidden; }
.head {
  display: flex;
  align-items: center;
  gap: 4px;
  color: #29386f;
  font-size: 14px;
  line-height: 20px;
}
.head::after { content: ""; flex: 1; margin-left: 4px; height: 1px; background: #e2e2e2; }
.tiles {
  display: grid;
  grid-template-columns: repeat(auto-fill, 246px);
  gap: 8px;
  padding: 8px 0 7px 12px;
}
.drives { padding-top: 7px; }
.tile { gap: 4px; height: 48px; align-items: flex-start; justify-content: flex-start; text-align: left; }
.name { padding: 6px 0 0 1px; }
.info { flex: 1; display: flex; flex-direction: column; white-space: nowrap; }
.info span, .info small { padding-left: 1px; }
.info small { font-size: 11px; color: #6d6d6d; }
progress {
  appearance: none;
  display: block;
  width: 189px;
  height: 13px;
  margin: 1px 0;
  border: 1px solid #bcbcbc;
  background: #e6e6e6;
}
progress::-webkit-progress-bar { background: #e6e6e6; }
progress::-webkit-progress-value { background: #26a0da; }

.status {
  flex: none;
  display: flex;
  align-items: center;
  justify-content: space-between;
  height: 23px;
  padding: 0 8px 0 14px;
  color: #2b3c66;
}
.status div { display: flex; align-items: center; gap: 7px; }

/* Taskbar */
.taskbar { flex: none; height: 40px; display: flex; background: #24405a; color: #fff; }
.pins { display: flex; flex: none; }
.pins button { width: 49px; }
.tasks { display: flex; gap: 3px; padding: 1px 0 1px 3px; }
.tasks button {
  width: 158px;
  gap: 5px;
  padding: 0 8px 0 9px;
  justify-content: flex-start;
  white-space: nowrap;
  background: #41586c;
  border: 1px solid #6b7e8e;
}
.tasks .active { background: #778896; border-color: #96a4af; }
.ellipsis { margin-left: auto; }
.tray { display: flex; align-items: center; gap: 8px; margin-left: auto; padding-right: 16px; }
.tray time { margin-left: 2px; font-size: 11px; line-height: 18px; text-align: center; }
```
